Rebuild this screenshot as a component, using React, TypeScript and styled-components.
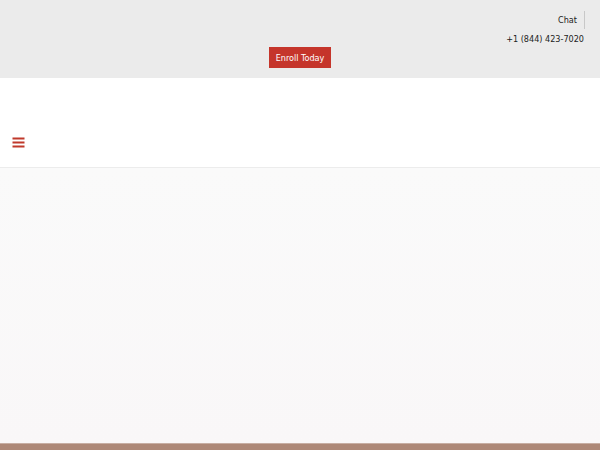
import React from "react";
import styled, { createGlobalStyle } from "styled-components";

const GlobalStyle = createGlobalStyle`
  html, body {
    margin: 0;
    padding: 0;
    height: 100%;
  }
  body {
    font-family: "DejaVu Sans Condensed", "DejaVu Sans", Verdana, sans-serif;
    font-stretch: condensed;
    background: #ffffff;
  }
  #root {
    min-height: 100%;
  }
`;

const Page = styled.div`
  display: flex;
  flex-direction: column;
  height: 450px;
  overflow: hidden;
`;

const TopBar = styled.div`
  height: 78px;
  background: #ebebeb;
  display: flex;
  flex-direction: column;
  box-sizing: border-box;
  padding: 11px 15px 0 0;
`;

const UtilityRow = styled.div`
  display: flex;
  justify-content: flex-end;
`;

const UtilityLink = styled.a`
  font-size: 9px;
  line-height: 18px;
  color: #222;
  text-decoration: none;
  padding-right: 7px;
  border-right: 1px solid #c8c8c8;
`;

const Phone = styled.div`
  font-size: 9px;
  line-height: 12px;
  color: #222;
  text-align: right;
  margin-top: 4px;
  padding-right: 1px;
`;

const EnrollRow = styled.div`
  display: flex;
  justify-content: center;
  padding-left: 15px;
  margin-top: 2px;
`;

const EnrollButton = styled.a`
  display: inline-flex;
  align-items: center;
  justify-content: center;
  width: 62px;
  height: 21px;
  background: #c5352b;
  color: #fff;
  font-size: 9px;
  text-decoration: none;
`;

const Header = styled.header`
  height: 90px;
  background: #fff;
  border-bottom: 1px solid #ececec;
  display: flex;
  align-items: flex-end;
  box-sizing: border-box;
  padding: 0 0 19px 12px;
`;

const MenuButton = styled.button`
  border: 0;
  background: transparent;
  padding: 0;
  display: flex;
  cursor: pointer;
`;

const Hero = styled.section`
  flex: 1;
  background: linear-gradient(to bottom, #fafafa, #f9f7f8);
`;

const FooterStrip = styled.div`
  height: 6px;
  background: #ad8877;
  border-top: 1px solid #c7aea3;
`;

export default function App() {
  return (
    <>
      <GlobalStyle />
      <Page>
        <TopBar>
          <UtilityRow>
            <UtilityLink href="#">Chat</UtilityLink>
          </UtilityRow>
          <Phone>+1 (844) 423-7020</Phone>
          <EnrollRow>
            <EnrollButton href="#">Enroll Today</EnrollButton>
          </EnrollRow>
        </TopBar>
        <Header>
          <MenuButton aria-label="Menu">
            <svg width="13" height="11" viewBox="0 0 13 11">
              <rect x="0.5" y="0.5" width="12" height="2" fill="#c0392b" />
              <rect x="0.5" y="4.5" width="12" height="2" fill="#c0392b" />
              <rect x="0.5" y="8.5" width="12" height="2" fill="#c0392b" />
            </svg>
          </MenuButton>
        </Header>
        <Hero />
        <FooterStrip />
      </Page>
    </>
  );
}
